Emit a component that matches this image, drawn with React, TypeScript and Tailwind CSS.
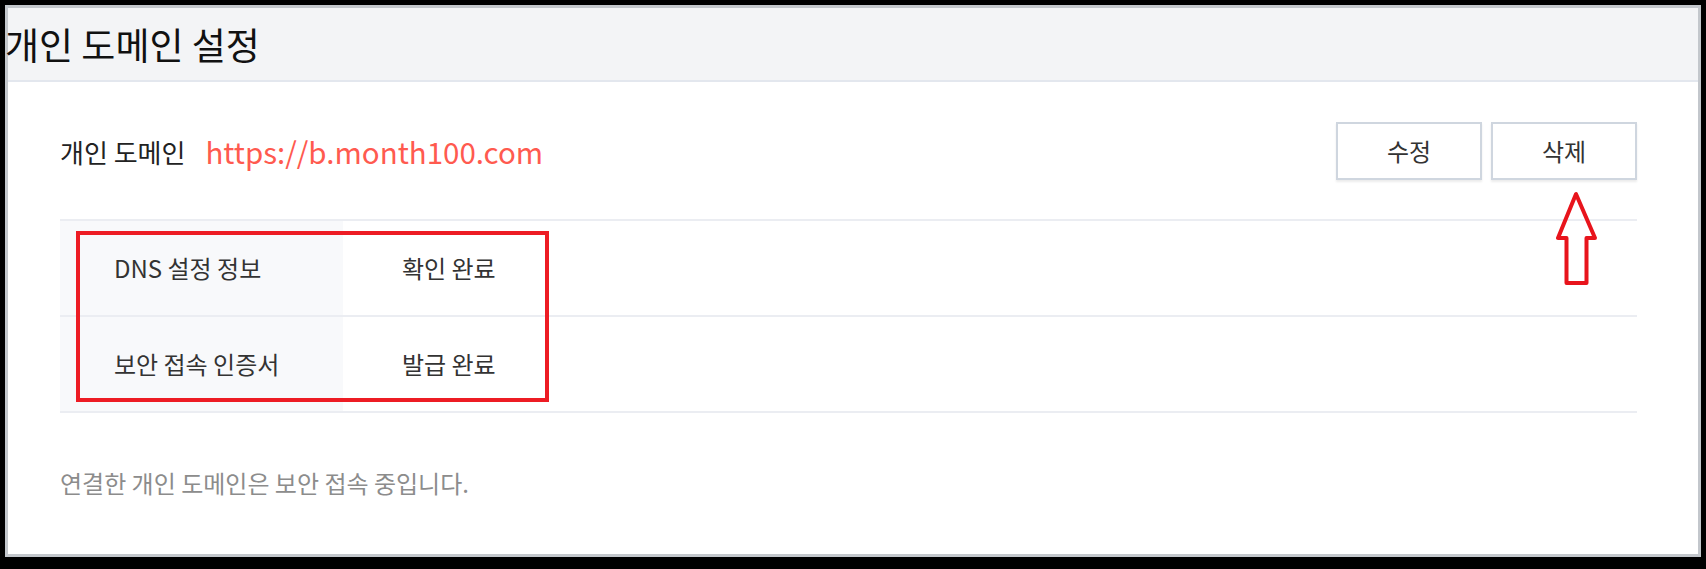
// 개인 도메인 설정 panel

const rows = [
  { label: "DNS 설정 정보", value: "확인 완료" },
  { label: "보안 접속 인증서", value: "발급 완료" },
];

function UpArrow() {
  return (
    <svg
      className="absolute left-[1550px] top-[188px]"
      width="52"
      height="100"
      viewBox="0 0 52 100"
      fill="none"
    >
      <path
        d="M26 6 L8 50 H16.5 V95 H36.5 V50 H45 Z"
        stroke="#e8141c"
        strokeWidth="4"
        strokeLinejoin="round"
      />
    </svg>
  );
}

export default function App() {
  return (
    <div
      className="relative h-[569px] w-[1706px] bg-black pt-2 pl-2 pr-2 pb-[15px]"
      style={{ fontFamily: '"Noto Sans CJK KR", "Noto Sans", sans-serif' }}
    >
      <div className="flex h-full flex-col bg-white shadow-[0_0_0_3px_#c3c7cc]">
        {/* HEADER */}
        <div className="flex h-[74px] items-center border-b-2 border-[#e3e7ee] bg-[#f3f4f6]">
          <h1 className="-ml-[3px] text-[37px] leading-none text-[#111]">
            개인 도메인 설정
          </h1>
        </div>

        {/* BODY */}
        <div className="pl-[52px] pr-[61px]">
          <div className="mt-[40px] flex h-[58px] items-center justify-between">
            <div className="flex items-center">
              <span className="text-[26px] text-[#222]">개인 도메인</span>
              <span className="ml-[20px] text-[29.5px] text-[#ff5a4f]">
                https://b.month100.com
              </span>
            </div>
            <div className="flex gap-[9px]">
              {["수정", "삭제"].map((b) => (
                <button
                  key={b}
                  className="h-[58px] w-[146px] border-2 border-[#cfd6df] bg-white text-[24px] text-[#333] shadow-[0_2px_2px_rgba(0,0,0,0.08)]"
                >
                  {b}
                </button>
              ))}
            </div>
          </div>

          {/* TABLE */}
          <div className="relative mt-[39px] border-t-2 border-[#ebedf2]">
            {rows.map((r) => (
              <div
                key={r.label}
                className="grid h-[96px] grid-cols-[283px_1fr] border-b-2 border-[#ebedf2]"
              >
                <div className="flex items-center bg-[#f8f9fb] pl-[54px] text-[24px] text-[#333]">
                  {r.label}
                </div>
                <div className="flex items-center pl-[59px] text-[24px] text-[#333]">
                  {r.value}
                </div>
              </div>
            ))}
            <div className="absolute left-[16px] top-[10px] h-[171px] w-[473px] border-4 border-[#ed1c24]" />
          </div>

          <p className="mt-[54px] text-[24px] leading-[32px] text-[#8c8c8c]">
            연결한 개인 도메인은 보안 접속 중입니다.
          </p>
        </div>
      </div>

      <UpArrow />
    </div>
  );
}
